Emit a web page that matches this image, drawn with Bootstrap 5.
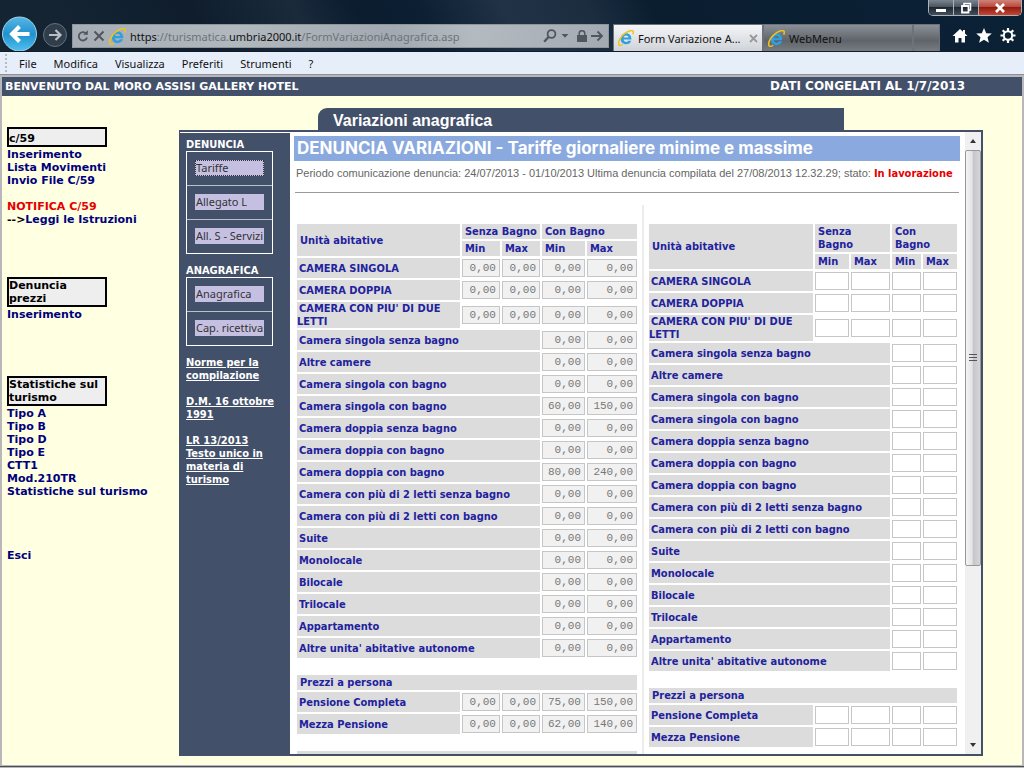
<!DOCTYPE html>
<html lang="it">
<head>
<meta charset="utf-8">
<meta name="viewport" content="width=device-width, initial-scale=1">
<title>Form Variazione Anagrafica</title>
<link href="https://cdn.jsdelivr.net/npm/bootstrap@5.3.0/dist/css/bootstrap.min.css" rel="stylesheet">
<style>
  :root { --navy: #43506a; --ui: "Noto Sans", "Open Sans", sans-serif; --tahoma: "DejaVu Sans Condensed", "DejaVu Sans", sans-serif; --verdana: "DejaVu Sans", sans-serif; }
  body { height: 100vh; overflow: hidden; background: #ffffe1; font-family: var(--verdana); font-size: 11px; line-height: 13px; color: #000; }
  button { font: inherit; }

  /* Browser chrome */
  .chrome-top { height: 52px; background: linear-gradient(64deg, #142433 0 8%, #0f1d2d 20%, #1a2a3b 30%, #0b1c2f 36%, #0d1f32 42%, #213246 50%, #1c2d40 58%, #0b1e30 64%, #0b2136 100%); border-bottom: 1px solid #111c28; font-family: var(--ui); padding-left: 1px; }
  .nav-round { border: 0; padding: 0; background: none; line-height: 0; }
  .address { height: 24px; background: linear-gradient(90deg, #a6adb4, #b1b8be 30%, #a2a9b0 60%, #b3bac0 75%, #a3aab2); border: 1px solid #8d959d; color: #6c737a; margin-bottom: 3px; }
  .url-dark { color: #111; }
  .btab { height: 27px; width: 150px; border: 1px solid #6b7279; border-bottom: 0; color: #111; }
  .btab-on { background: linear-gradient(#f4f5f7, #cfd3d8); }
  .btab-off { background: linear-gradient(#8b9096, #5f646a 60%, #777c81); }
  .btab-new { width: 27px; }
  .tools { margin: 0 8px 0 12px; }
  .winbtns { right: 2px; top: 0; height: 16px; border: 1px solid #aab3bb; border-top: 0; border-radius: 0 0 5px 5px; overflow: hidden; }
  .winbtns button { border: 0; padding: 0; height: 15px; width: 25px; line-height: 0; background: linear-gradient(#7b858f, #4a5560 45%, #1c2834 50%, #43505c); border-right: 1px solid #aab3bb; }
  .winbtns .win-close { width: 42px; border: 0; background: linear-gradient(#d0827a, #b84a3e 45%, #8e1d10 50%, #c8452f); }
  .menubar { height: 23px; background: #e6eefa; border-bottom: 1px solid #8c8f98; font-family: var(--ui); padding: 0 8px 0 5px; }
  .menubar a { color: #111; text-decoration: none; margin-right: 17px; }
  .grip { width: 2px; height: 18px; margin-right: 12px; background: repeating-linear-gradient(#b4bcc8 0 2px, transparent 2px 4px); }

  /* Page */
  .site { border: solid #b9b7b9; border-width: 2px 2px 1px 2px; min-height: 0; }
  .site-body { min-height: 0; }
  .site-bar { height: 19px; background: var(--navy); color: #fff; font-weight: bold; padding: 0 57px 0 3px; }
  .date-note { font-size: 12px; }
  .page-end { height: 2px; background: #b9b7b9; border-top: 1px solid #4a4d5c; }
  .side { width: 177px; flex: none; padding: 31px 0 0 5px; font-weight: bold; }
  .side a { color: #00007c; text-decoration: none; display: block; white-space: nowrap; }
  .side-alert { color: #e60000; }
  .side-head { width: 100px; border: 2px solid #000; background: #eee; font-size: 11px; line-height: 13px; font-weight: bold; margin: 0 0 1px; }
  .side-head.one-line { padding-top: 3px; }
  .side-group { margin-bottom: 51px; }
  .work { padding: 12px 39px 9px 0; min-width: 0; }
  .work-tab { height: 22px; margin: 0 139px; background: var(--navy); border-top-left-radius: 9px; color: #fff; padding-left: 15px; font: bold 16px/25px "Liberation Sans", sans-serif; }
  .frame-box { border: 2px solid var(--navy); border-left-width: 1px; min-height: 0; }
  .steps { width: 110px; flex: none; background: var(--navy); border-top: 1px solid #fff; padding: 5px 17px 0 6px; font-family: var(--tahoma); font-weight: bold; color: #fff; }
  .steps a { color: #fff; display: block; margin-bottom: 13px; }
  .steps h2 { font: inherit; margin: 0; }
  .step-list { border: 1px solid #fff; margin-bottom: 10px; }
  .step-list li { padding: 8px; height: 33px; }
  .step-list li + li { border-top: 1px solid #b9c0cc; height: 34px; }
  .step-list button { display: block; width: 100%; height: 16px; border: 0; padding: 0 1px; background: #c5c0e2; color: #333; font: 11px/16px var(--ui); text-align: left; white-space: nowrap; }
  .step-list button.current { outline: 1px dotted #333; outline-offset: -1px; }

  .pane { background: #fff; padding: 4px 5px 0 4px; min-width: 0; overflow: hidden; }
  .pane-title { height: 25px; margin: 0; padding-left: 3px; background: #8aa9de; color: #fff; font: bold 17px/25px Inter, sans-serif; white-space: nowrap; }
  .pane-note { margin: 6px 0 0 2px; font-family: "Liberation Sans", sans-serif; color: #666; white-space: nowrap; }
  .pane-note strong { font-family: var(--tahoma); color: #e60000; }
  .pane-rule { height: 1px; margin: 12px 1px; background: #999; }
  .sheets { display: grid; grid-template-columns: 344fr 2px 312fr; column-gap: 3px; margin: 0 1px; }
  .sheet-split { background: #ececec; }
  .rates { width: 100%; table-layout: fixed; border-collapse: separate; border-spacing: 2px; margin-top: 17px; font: bold 11px/13px var(--tahoma); color: #22229c; }
  .rates td, .rates th { padding: 0; font-weight: bold; text-align: left; vertical-align: middle; }
  .rates th { background: #dcdcdc; text-indent: 2px; }
  .rates thead th, .rates .section th { padding: 1px 0 1px 3px; text-indent: 0; }
  .rates .entry { height: 20px; }
  .rates .spacer td { height: 13px; }
  .rates input { display: block; width: 100%; height: 18px; border: 1px solid #c6c6c6; border-radius: 0; padding: 0 3px; font: 11px/16px "Liberation Mono", monospace; text-align: right; background: #fff; color: #222; }
  .rates input:disabled { background: #f1f1f1; color: #777; opacity: 1; }
  .w29 { width: 29px; } .w34 { width: 34px; } .w38 { width: 38px; } .w39 { width: 39px; } .w43 { width: 43px; } .w50 { width: 50px; }

  .rail { width: 16px; flex: none; background: #f0f0f0; }
  .rail button { border: 0; padding: 0; height: 18px; background: none; line-height: 0; }
  .rail-track { min-height: 0; }
  .rail-thumb { height: 71%; border: 1px solid #989898; border-radius: 2px; background: linear-gradient(90deg, #f4f4f4, #e3e3e6 45%, #c6c6ca 50%, #d6d6da); }
</style>
</head>
<body class="d-flex flex-column">

<svg class="d-none" aria-hidden="true">
  <symbol id="ie" viewBox="0 0 16 16">
    <path d="M13.4 9.6H5.600c.1 1.5 1.100 2.300 2.500 2.300 1 0 1.700-.4 2.200-1.200h2.900c-.7 2.300-2.600 3.600-5.100 3.600-3.300 0-5.500-2.300-5.500-5.500 0-3.300 2.300-5.600 5.500-5.600 3.400 0 5.500 2.400 5.300 6.400zM5.700 7.600h4.800C10.300 6.300 9.500 5.500 8.100 5.500S5.900 6.300 5.700 7.600z" fill="#2f9fdf"/>
    <path d="M1.200 15.200C-.6 12.800 2.200 6.400 7.200 3.100 10.500.9 14.100-.2 15.100 1.300c.5.8.2 1.900-.3 3" fill="none" stroke="#f0c21c" stroke-width="1.500"/>
    <path d="M1.200 15.200c.8.5 2.400 0 3.700-.9" fill="none" stroke="#f0c21c" stroke-width="1.300"/>
  </symbol>
</svg>

<header class="flex-shrink-0">
  <div class="chrome-top position-relative d-flex align-items-end">
    <button class="nav-round" aria-label="Indietro">
      <svg width="37" height="35" viewBox="0 0 37 35"><defs><linearGradient id="bk" x2="0" y2="1"><stop offset="0" stop-color="#58b7e4"/><stop offset=".5" stop-color="#2191cf"/><stop offset="1" stop-color="#4fc0ee"/></linearGradient></defs><circle cx="18.500" cy="18" r="17" fill="url(#bk)" stroke="#9fd2ec" stroke-width="1"/><path d="M28.500 18H12M18.500 10.500 11 18l7.500 7.500" fill="none" stroke="#fff" stroke-width="4"/></svg>
    </button>
    <button class="nav-round ms-1 me-1" aria-label="Avanti">
      <svg width="26" height="31" viewBox="0 0 26 31"><circle cx="13" cy="15" r="11.500" fill="#303d4a" stroke="#66717b"/><path d="M7 15h11M13.500 10l5 5-5 5" fill="none" stroke="#b9bfc5" stroke-width="2.200"/></svg>
    </button>
    <div class="address flex-grow-1 d-flex align-items-center px-1 me-1" role="group" aria-label="Indirizzo">
      <svg width="12" height="14" viewBox="0 0 12 14"><path d="M9.500 5A4.200 4.200 0 1 0 10 8.500" fill="none" stroke="#50575e" stroke-width="1.800"/><path d="M6.200 5.800h4.600V1.300z" fill="#50575e"/></svg>
      <svg class="ms-1" width="12" height="14" viewBox="0 0 12 14"><path d="M1.500 2.500l9 9M10.500 2.500l-9 9" stroke="#50575e" stroke-width="2"/></svg>
      <svg class="ms-1 me-1" width="17" height="17"><use href="#ie"/></svg>
      <span class="text-nowrap flex-grow-1"><span class="url-dark">https</span>://turismatica.<span class="url-dark">umbria2000.it</span>/FormVariazioniAnagrafica.asp</span>
      <svg width="14" height="14" viewBox="0 0 14 14"><circle cx="8.500" cy="5" r="3.900" fill="none" stroke="#50575e" stroke-width="1.800"/><path d="M5.700 7.800 1.200 12.800" stroke="#50575e" stroke-width="2.400"/></svg>
      <svg class="ms-1" width="8" height="6" viewBox="0 0 8 6"><path d="M.5 1h7L4 4.800z" fill="#50575e"/></svg>
      <svg class="ms-2" width="10" height="12" viewBox="0 0 10 12"><path d="M0 5h10v7H0z" fill="#50575e"/><path d="M2.200 6V3.500a2.800 2.800 0 0 1 5.600 0V6" fill="none" stroke="#50575e" stroke-width="1.500"/></svg>
      <svg class="ms-1" width="13" height="12" viewBox="0 0 13 12"><path d="M0 6h11M6.500 1.500 11 6l-4.500 4.500" fill="none" stroke="#50575e" stroke-width="1.800"/></svg>
    </div>
    <div class="btab btab-on d-flex align-items-center ps-1 pe-1">
      <svg class="me-1 flex-shrink-0" width="16" height="16"><use href="#ie"/></svg>
      <span class="text-nowrap flex-grow-1">Form Variazione A...</span>
      <svg width="9" height="9" viewBox="0 0 9 9"><path d="M1 1l7 7M8 1 1 8" stroke="#999" stroke-width="1.800"/></svg>
    </div>
    <div class="btab btab-off d-flex align-items-center ps-1">
      <svg class="me-1" width="17" height="17"><use href="#ie"/></svg>
      <span>WebMenu</span>
    </div>
    <div class="btab btab-off btab-new"></div>
    <div class="tools d-flex gap-2 pb-2">
      <svg width="16" height="15" viewBox="0 0 16 15"><path d="M8 1 .500 8H3v6.500h3.500V10h3v4.500H13V8h2.500L13 5.600V2h-2v1.800z" fill="#fff"/></svg>
      <svg width="16" height="15" viewBox="0 0 16 15"><path d="M8 0l2.200 5.200 5.600.4-4.300 3.600 1.400 5.500L8 11.700l-4.900 3 1.400-5.500L.2 5.600l5.600-.4z" fill="#fff"/></svg>
      <svg width="16" height="15" viewBox="0 0 16 15"><circle cx="8" cy="7.500" r="4.200" fill="none" stroke="#fff" stroke-width="2"/><path d="M8 0v3M8 12v3M.5 7.500h3M12.500 7.500h3M2.700 2.200l2 2M11.300 10.800l2 2M13.300 2.200l-2 2M4.700 10.800l-2 2" stroke="#fff" stroke-width="2.200"/></svg>
    </div>
    <div class="winbtns position-absolute d-flex">
      <button aria-label="Riduci"><svg width="12" height="10"><path d="M1 6h10v3H1z" fill="#fff"/></svg></button>
      <button aria-label="Ripristina"><svg width="12" height="12" viewBox="0 0 12 12"><path d="M4 3V1.500h6.500V8H9" fill="none" stroke="#fff" stroke-width="1.500"/><path d="M2 4h6.500v6.500H2z" fill="none" stroke="#fff" stroke-width="1.800"/></svg></button>
      <button class="win-close" aria-label="Chiudi"><svg width="12" height="10" viewBox="0 0 12 10"><path d="M2 1l8 8M10 1 2 9" stroke="#fff" stroke-width="2.600"/></svg></button>
    </div>
  </div>
  <nav class="menubar d-flex align-items-center" aria-label="Menu del browser">
    <span class="grip"></span>
    <a href="#">File</a><a href="#">Modifica</a><a href="#">Visualizza</a><a href="#">Preferiti</a><a href="#">Strumenti</a><a href="#">?</a>
  </nav>
</header>

<div class="site flex-grow-1 d-flex flex-column">
  <div class="site-bar d-flex align-items-center justify-content-between flex-shrink-0">
    <span>BENVENUTO DAL MORO ASSISI GALLERY HOTEL</span>
    <span class="date-note">DATI CONGELATI AL 1/7/2013</span>
  </div>
  <div class="site-body d-flex flex-grow-1">
    <nav class="side" aria-label="Menu principale">
      <div class="side-group">
        <h2 class="side-head one-line">c/59</h2>
        <a href="#">Inserimento</a>
        <a href="#">Lista Movimenti</a>
        <a href="#">Invio File C/59</a>
        <br>
        <span class="side-alert">NOTIFICA C/59</span>
        <a href="#"><span class="text-black">--&gt;</span>Leggi le Istruzioni</a>
      </div>
      <div class="side-group pb-1">
        <h2 class="side-head">Denuncia prezzi</h2>
        <a href="#">Inserimento</a>
      </div>
      <div class="side-group">
        <h2 class="side-head text-nowrap">Statistiche sul<br>turismo</h2>
        <a href="#">Tipo A</a>
        <a href="#">Tipo B</a>
        <a href="#">Tipo D</a>
        <a href="#">Tipo E</a>
        <a href="#">CTT1</a>
        <a href="#">Mod.210TR</a>
        <a href="#">Statistiche sul turismo</a>
      </div>
      <a href="#">Esci</a>
    </nav>

    <main class="work flex-grow-1 d-flex flex-column">
      <h1 class="work-tab flex-shrink-0">Variazioni anagrafica</h1>
      <div class="frame-box flex-grow-1 d-flex">
        <aside class="steps">
          <h2>DENUNCIA</h2>
          <ul class="step-list list-unstyled">
            <li><button class="current">Tariffe</button></li>
            <li><button>Allegato L</button></li>
            <li><button>All. S - Servizi</button></li>
          </ul>
          <h2>ANAGRAFICA</h2>
          <ul class="step-list list-unstyled">
            <li><button>Anagrafica</button></li>
            <li><button>Cap. ricettiva</button></li>
          </ul>
          <a href="#">Norme per la compilazione</a>
          <a href="#" class="text-nowrap">D.M. 16 ottobre<br>1991</a>
          <a href="#">LR 13/2013<br>Testo unico in materia di turismo</a>
        </aside>
        <section class="pane flex-grow-1">
          <h2 class="pane-title">DENUNCIA VARIAZIONI - Tariffe giornaliere minime e massime</h2>
          <p class="pane-note">Periodo comunicazione denuncia: 24/07/2013 - 01/10/2013 Ultima denuncia compilata del 27/08/2013 12.32.29; stato: <strong>In lavorazione</strong></p>
          <div class="pane-rule"></div>
          <form class="sheets">
            <div>
              <table class="rates" id="current">
                <colgroup><col><col class="w38"><col class="w38"><col class="w43"><col class="w50"></colgroup>
                <thead>
                  <tr><th rowspan="2">Unità abitative</th><th colspan="2" class="text-nowrap">Senza Bagno</th><th colspan="2">Con Bagno</th></tr>
                  <tr><th>Min</th><th>Max</th><th>Min</th><th>Max</th></tr>
                </thead>
                <tbody></tbody>
              </table>
            </div>
            <div class="sheet-split"></div>
            <div>
              <table class="rates" id="changed">
                <colgroup><col><col class="w34"><col class="w39"><col class="w29"><col class="w34"></colgroup>
                <thead>
                  <tr><th rowspan="2">Unità abitative</th><th colspan="2">Senza<br>Bagno</th><th colspan="2">Con<br>Bagno</th></tr>
                  <tr><th>Min</th><th>Max</th><th>Min</th><th>Max</th></tr>
                </thead>
                <tbody></tbody>
              </table>
            </div>
          </form>
        </section>
        <div class="rail d-flex flex-column">
          <button type="button" aria-label="Scorri su"><svg width="8" height="4" viewBox="0 0 8 4"><path d="M1 4h6L4 0z" fill="#333"/></svg></button>
          <div class="rail-track flex-grow-1">
            <div class="rail-thumb d-flex align-items-center justify-content-center"><svg width="8" height="8"><path d="M0 .5h8M0 3.500h8M0 6.500h8" stroke="#555"/></svg></div>
          </div>
          <button type="button" aria-label="Scorri giù"><svg width="8" height="4" viewBox="0 0 8 4"><path d="M1 0h6L4 4z" fill="#333"/></svg></button>
        </div>
      </div>
    </main>
  </div>
</div>
<div class="page-end flex-shrink-0"></div>

<script src="https://cdn.jsdelivr.net/npm/bootstrap@5.3.0/dist/js/bootstrap.bundle.min.js"></script>
<script>
  // Each entry: label followed by its prices; two prices mean "con bagno" only.
  const z = '0,00';
  const entries = [
    ['CAMERA SINGOLA', z, z, z, z],
    ['CAMERA DOPPIA', z, z, z, z],
    ["CAMERA CON PIU' DI DUE LETTI", z, z, z, z],
    ['Camera singola senza bagno', z, z],
    ['Altre camere', z, z],
    ['Camera singola con bagno', z, z],
    ['Camera singola con bagno', '60,00', '150,00'],
    ['Camera doppia senza bagno', z, z],
    ['Camera doppia con bagno', z, z],
    ['Camera doppia con bagno', '80,00', '240,00'],
    ['Camera con più di 2 letti senza bagno', z, z],
    ['Camera con più di 2 letti con bagno', z, z],
    ['Suite', z, z],
    ['Monolocale', z, z],
    ['Bilocale', z, z],
    ['Trilocale', z, z],
    ['Appartamento', z, z],
    ["Altre unita' abitative autonome", z, z],
    'Prezzi a persona',
    ['Pensione Completa', z, z, '75,00', '150,00'],
    ['Mezza Pensione', z, z, '62,00', '140,00'],
    '\u00a0'
  ];
  const heads = ['senza bagno min', 'senza bagno max', 'con bagno min', 'con bagno max'];
  function fill(id, locked) {
    document.querySelector('#' + id + ' tbody').innerHTML = entries.map((e, r) => {
      if (typeof e === 'string') {
        return `<tr class="spacer"><td colspan="5"></td></tr><tr class="section"><th colspan="5">${e}</th></tr>`;
      }
      const [label, ...prices] = e;
      const skip = 4 - prices.length;
      return `<tr class="entry"><th colspan="${1 + skip}" id="${id}-${r}">${label}</th>` + prices.map((p, i) =>
        `<td><input type="text" name="${id}-${r}-${i}" aria-label="${label}, ${heads[i + skip]}" ${locked ? `value="${p}" disabled` : ''}></td>`
      ).join('') + '</tr>';
    }).join('');
  }
  fill('current', true);
  fill('changed', false);
</script>
</body>
</html>
